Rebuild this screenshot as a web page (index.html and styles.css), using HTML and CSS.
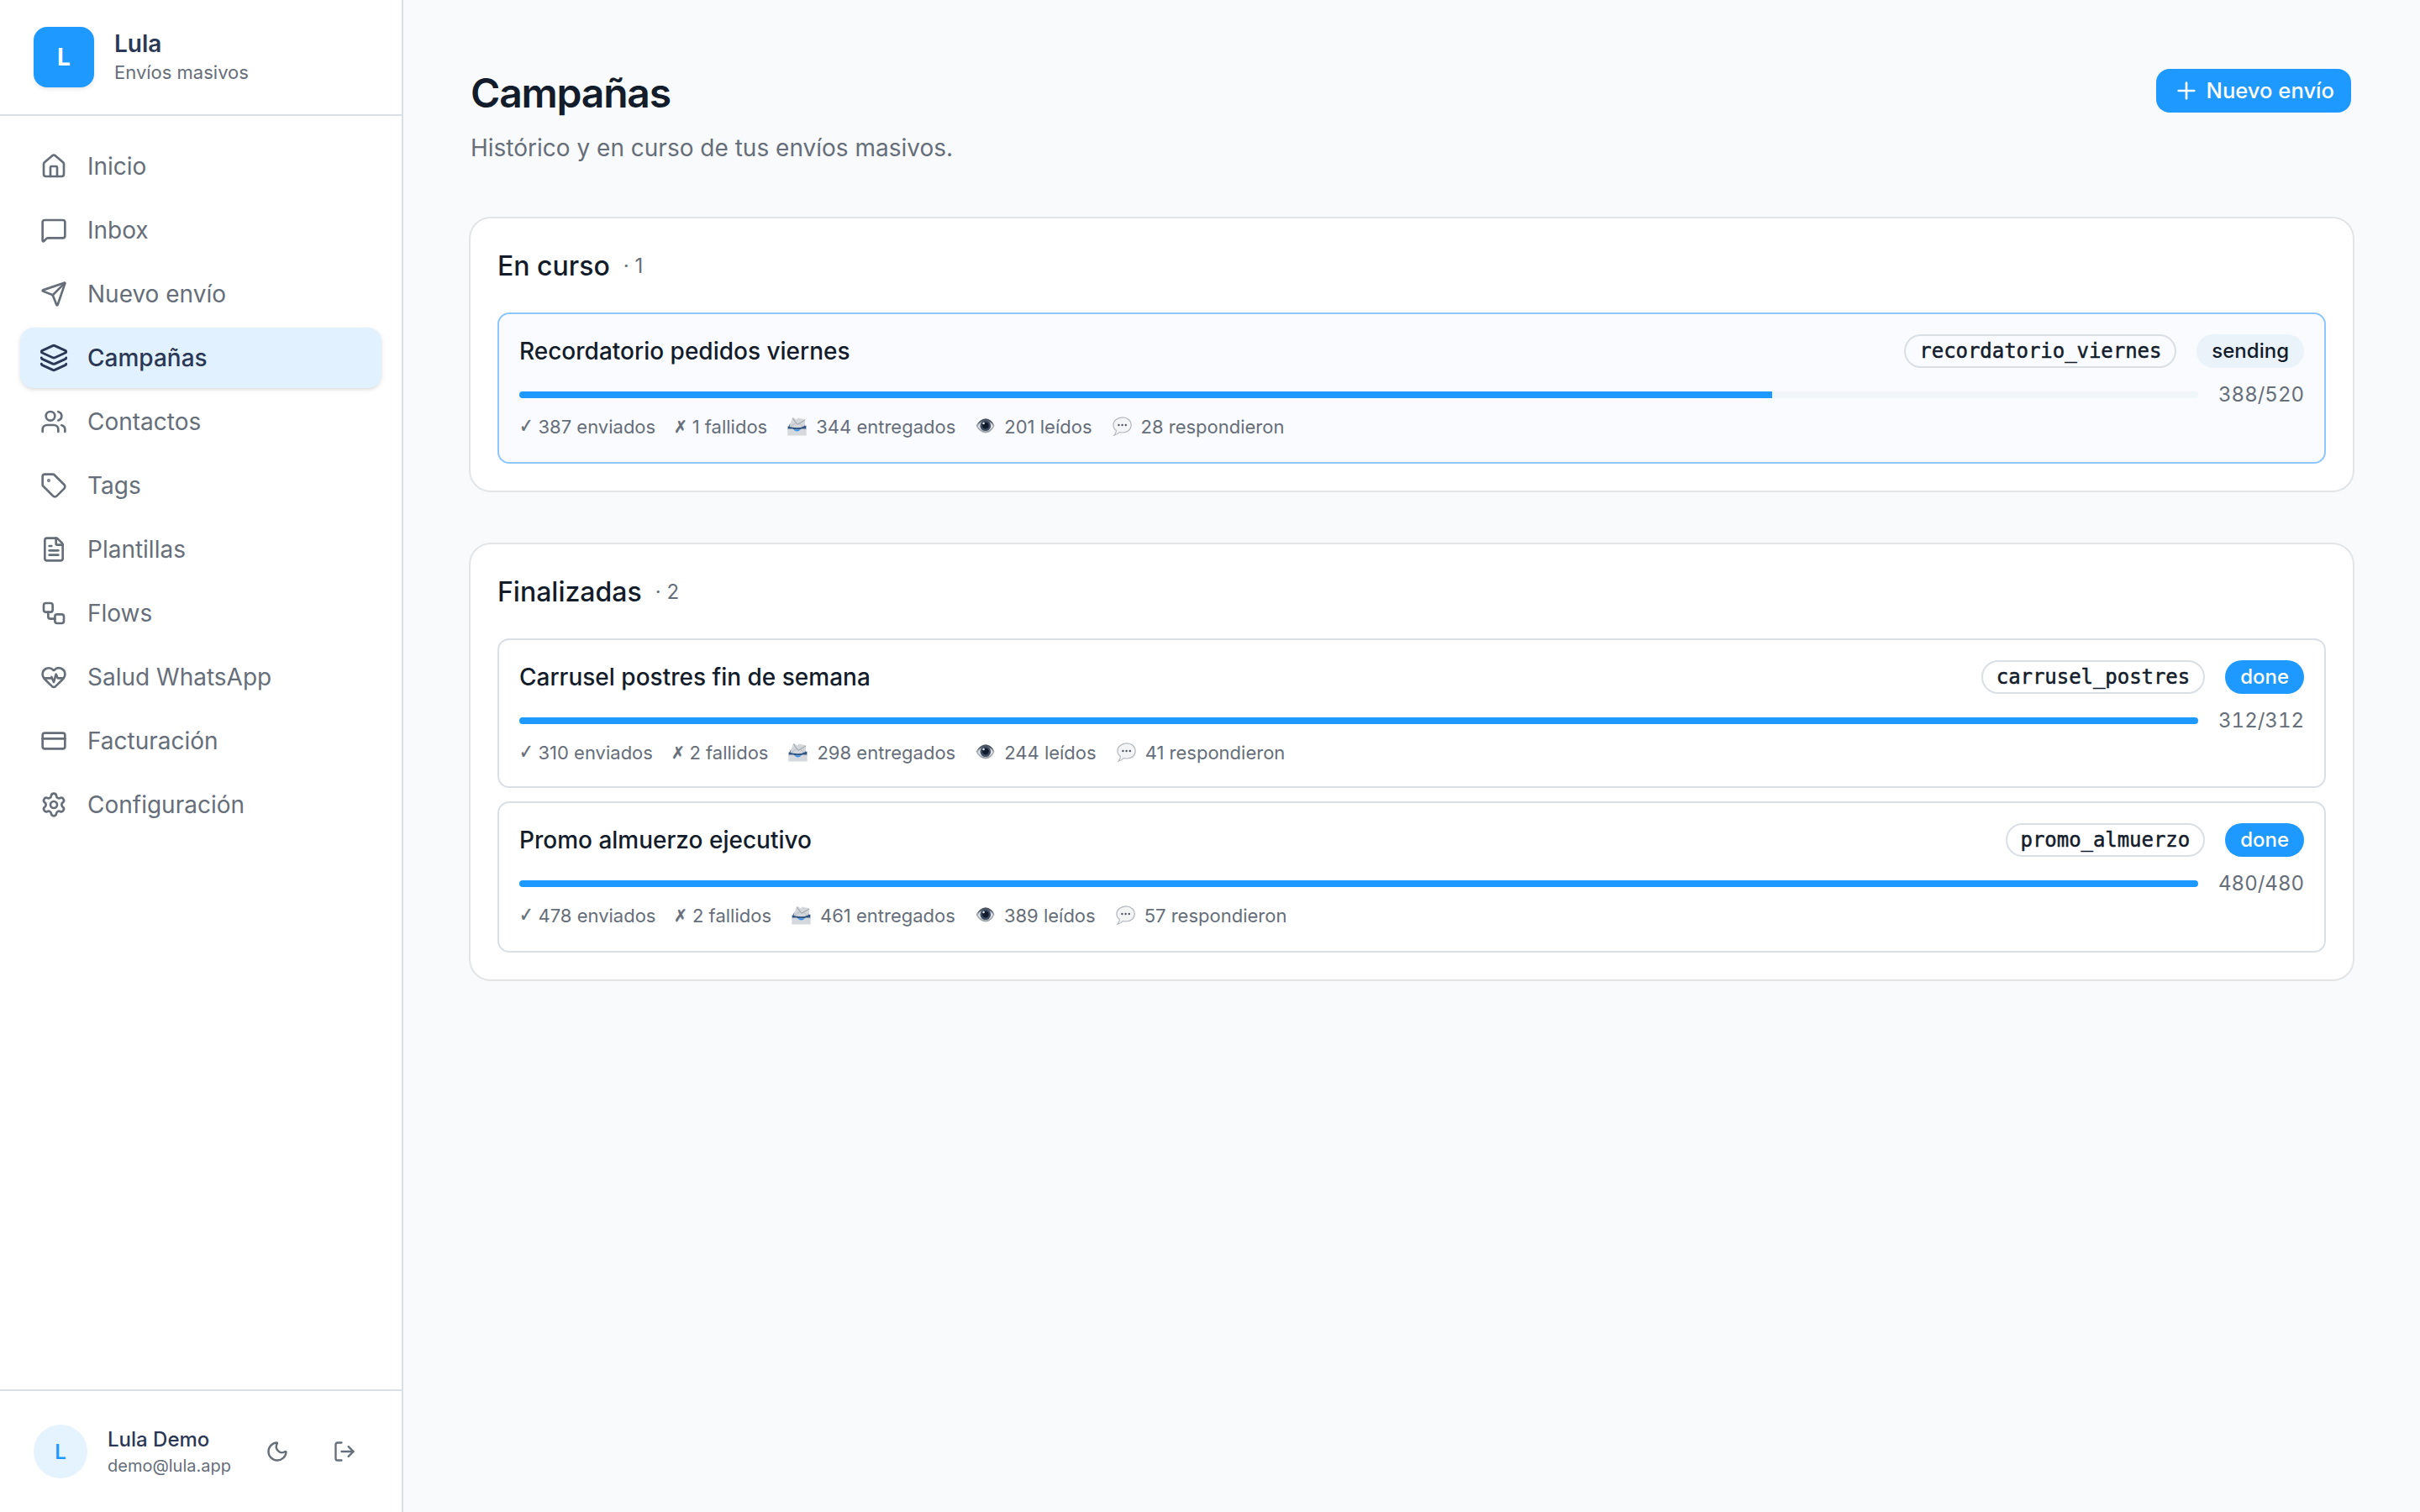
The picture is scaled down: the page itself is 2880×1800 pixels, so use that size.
FILE: index.html
```html
<!DOCTYPE html>
<html lang="es">
<head>
<meta charset="utf-8">
<title>Campañas · Lula</title>
<link rel="stylesheet" href="styles.css">
</head>
<body>
<svg class="sprite" aria-hidden="true">
  <symbol id="tray" viewBox="0 0 23 23">
    <path d="M1 12.5 L3 8.5 H20 L22 12.5Z" fill="#5c7593"/>
    <path d="M6.4 .5 L11 3.6 L12.8 1.6 L21.4 3.6 L20 14 H2.4 L3.4 8.6Z" fill="#d3d6da"/>
    <path d="M6.4 2 L12 9.4 L21 4" fill="none" stroke="#9a9fa6" stroke-width="1"/>
    <path d="M3.4 12 L10 7.4 M19.6 12.6 L14.4 8" fill="none" stroke="#b2b6bb" stroke-width=".8"/>
    <path d="M0.6 11.4 Q6 13 11.5 13.2 Q17 13 22.4 10.4 V15.4 H0.6Z" fill="#2f5482"/>
    <path d="M0.3 14.6 H6.3 Q8 16.6 11.5 16.6 Q15 16.6 16.7 14.6 H22.7 V22.4 H0.3Z" fill="#d5d8dc"/>
    <path d="M7.4 15.4 Q11.5 19.4 15.6 15.4Z" fill="#2f8ff0"/>
  </symbol>
  <symbol id="eye" viewBox="0 0 23 23">
    <path d="M.6 11 Q5 3.4 12 3.2 Q19 3.6 22.4 11 Q18.6 19.4 11.6 19.6 Q4.6 18.8 .6 11Z" fill="#a2a7ae"/>
    <path d="M.4 11.4 Q5 2.4 12 2.2 Q19.2 2.6 22.6 11 Q18 5 12 4.8 Q5.4 5 .4 11.4Z" fill="#4b5563"/>
    <path d="M2.4 11.4 Q6 5.6 12 5.4 Q18 5.8 21 11.2 Q17.4 17 11.8 17.2 Q6 16.8 2.4 11.4Z" fill="#dcdfe3"/>
    <circle cx="11.8" cy="10.8" r="6.3" fill="#3c4b60"/>
    <circle cx="11.9" cy="10.6" r="3.8" fill="#101a2b"/>
    <circle cx="9.6" cy="8" r="1.3" fill="#dfe5ec"/>
  </symbol>
  <symbol id="bubble" viewBox="0 0 23 23">
    <path d="M12 .8 C17.8 .8 22.2 4.8 22.2 10 C22.2 15.2 17.8 19 12 19 Q10 19 8.2 18.5 Q6 21.6 2 22.2 Q4.4 19.6 4.4 16.6 Q.9 14 .9 10 C.9 4.8 6 .8 12 .8Z" fill="#f3f4f6" stroke="#b4b8bd" stroke-width="1.2"/>
    <g fill="#4f5660"><circle cx="7.4" cy="10" r="1.2"/><circle cx="11.6" cy="10" r="1.2"/><circle cx="15.8" cy="10" r="1.2"/></g>
  </symbol>
</svg>
<div class="app">
  <aside class="sidebar">
    <div class="brand">
      <div class="brand-logo">L</div>
      <div class="brand-text">
        <span class="brand-name">Lula</span>
        <span class="brand-sub">Envíos masivos</span>
      </div>
    </div>
    <nav class="nav">
      <a class="nav-item"><svg class="icon" viewBox="0 0 24 24"><path d="M15 21v-8a1 1 0 0 0-1-1h-4a1 1 0 0 0-1 1v8"/><path d="M3 10a2 2 0 0 1 .709-1.528l7-6a2 2 0 0 1 2.582 0l7 6A2 2 0 0 1 21 10v9a2 2 0 0 1-2 2H5a2 2 0 0 1-2-2z"/></svg>Inicio</a>
      <a class="nav-item"><svg class="icon" viewBox="0 0 24 24"><path d="M22 17a2 2 0 0 1-2 2H6.828a2 2 0 0 0-1.414.586l-2.202 2.202A.71.71 0 0 1 2 21.286V5a2 2 0 0 1 2-2h16a2 2 0 0 1 2 2z"/></svg>Inbox</a>
      <a class="nav-item"><svg class="icon" viewBox="0 0 24 24"><path d="M14.536 21.686a.5.5 0 0 0 .937-.024l6.5-19a.496.496 0 0 0-.635-.635l-19 6.5a.5.5 0 0 0-.024.937l7.93 3.18a2 2 0 0 1 1.112 1.11z"/><path d="m21.854 2.147-10.94 10.939"/></svg>Nuevo envío</a>
      <a class="nav-item active"><svg class="icon" viewBox="0 0 24 24"><path d="M12.83 2.18a2 2 0 0 0-1.66 0L2.6 6.08a1 1 0 0 0 0 1.83l8.58 3.91a2 2 0 0 0 1.66 0l8.58-3.9a1 1 0 0 0 0-1.83z"/><path d="M2 12a1 1 0 0 0 .58.91l8.6 3.91a2 2 0 0 0 1.65 0l8.58-3.9A1 1 0 0 0 22 12"/><path d="M2 17a1 1 0 0 0 .58.91l8.6 3.91a2 2 0 0 0 1.65 0l8.58-3.9A1 1 0 0 0 22 17"/></svg>Campañas</a>
      <a class="nav-item"><svg class="icon" viewBox="0 0 24 24"><path d="M16 21v-2a4 4 0 0 0-4-4H6a4 4 0 0 0-4 4v2"/><path d="M16 3.128a4 4 0 0 1 0 7.744"/><path d="M22 21v-2a4 4 0 0 0-3-3.87"/><circle cx="9" cy="7" r="4"/></svg>Contactos</a>
      <a class="nav-item"><svg class="icon" viewBox="0 0 24 24"><path d="M12.586 2.586A2 2 0 0 0 11.172 2H4a2 2 0 0 0-2 2v7.172a2 2 0 0 0 .586 1.414l8.704 8.704a2.426 2.426 0 0 0 3.42 0l6.58-6.58a2.426 2.426 0 0 0 0-3.42z"/><circle cx="7.5" cy="7.5" r=".5" fill="currentColor"/></svg>Tags</a>
      <a class="nav-item"><svg class="icon" viewBox="0 0 24 24"><path d="M6 22a2 2 0 0 1-2-2V4a2 2 0 0 1 2-2h8a2.4 2.4 0 0 1 1.704.706l3.588 3.588A2.4 2.4 0 0 1 20 8v12a2 2 0 0 1-2 2z"/><path d="M14 2v5a1 1 0 0 0 1 1h5"/><path d="M10 9H8"/><path d="M16 13H8"/><path d="M16 17H8"/></svg>Plantillas</a>
      <a class="nav-item"><svg class="icon" viewBox="0 0 24 24"><rect width="8" height="8" x="3" y="3" rx="2"/><path d="M7 11v4a2 2 0 0 0 2 2h4"/><rect width="8" height="8" x="13" y="13" rx="2"/></svg>Flows</a>
      <a class="nav-item"><svg class="icon" viewBox="0 0 24 24"><path d="M2 9.5a5.5 5.5 0 0 1 9.591-3.676.56.56 0 0 0 .818 0A5.49 5.49 0 0 1 22 9.5c0 2.29-1.5 4-3 5.5l-5.492 5.313a2 2 0 0 1-3 .019L5 15c-1.5-1.5-3-3.2-3-5.5"/><path d="M3.22 13H9.5l.5-1 2 4.5 2-7 1.5 3.5h5.27"/></svg>Salud WhatsApp</a>
      <a class="nav-item"><svg class="icon" viewBox="0 0 24 24"><rect width="20" height="14" x="2" y="5" rx="2"/><path d="M2 10h20"/></svg>Facturación</a>
      <a class="nav-item"><svg class="icon" viewBox="0 0 24 24"><path d="M9.671 4.136a2.34 2.34 0 0 1 4.659 0 2.34 2.34 0 0 0 3.319 1.915 2.34 2.34 0 0 1 2.33 4.033 2.34 2.34 0 0 0 0 3.831 2.34 2.34 0 0 1-2.33 4.033 2.34 2.34 0 0 0-3.319 1.915 2.34 2.34 0 0 1-4.659 0 2.34 2.34 0 0 0-3.32-1.915 2.34 2.34 0 0 1-2.33-4.033 2.34 2.34 0 0 0 0-3.831A2.34 2.34 0 0 1 6.35 6.051a2.34 2.34 0 0 0 3.319-1.915"/><circle cx="12" cy="12" r="3"/></svg>Configuración</a>
    </nav>
    <div class="account">
      <div class="avatar">L</div>
      <div class="account-text">
        <span class="account-name">Lula Demo</span>
        <span class="account-mail">demo@lula.app</span>
      </div>
      <button class="icon-btn" aria-label="Tema"><svg class="icon small" viewBox="0 0 24 24"><path d="M20.985 12.486a9 9 0 1 1-9.473-9.472c.405-.022.617.46.402.803a6 6 0 0 0 8.268 8.268c.344-.215.825-.004.803.401"/></svg></button>
      <button class="icon-btn" aria-label="Salir"><svg class="icon small" viewBox="0 0 24 24"><path d="m16 17 5-5-5-5"/><path d="M21 12H9"/><path d="M9 21H5a2 2 0 0 1-2-2V5a2 2 0 0 1 2-2h4"/></svg></button>
    </div>
  </aside>

  <main class="main">
    <header class="page-head">
      <div>
        <h1 class="title">Campañas</h1>
        <p class="subtitle">Histórico y en curso de tus envíos masivos.</p>
      </div>
      <button class="btn"><svg class="icon" viewBox="0 0 24 24"><path d="M5 12h14"/><path d="M12 5v14"/></svg><span class="btn-label">Nuevo envío</span></button>
    </header>

    <section class="card">
      <h2 class="card-title">En curso <span class="card-count">· 1</span></h2>
      <div class="rows">
        <article class="row live">
          <div class="row-head"><span class="row-name">Recordatorio pedidos viernes</span><span class="badge mono">recordatorio_viernes</span><span class="badge soft">sending</span></div>
          <div class="progress"><div class="track"><div class="fill" style="width:74.6%"></div></div><span class="count">388/520</span></div>
          <div class="stats">
            <span class="stat"><span class="tick">✓</span>387 enviados</span>
            <span class="stat"><span class="cross">✗</span>1 fallidos</span>
            <span class="stat"><svg class="emoji"><use href="#tray"/></svg>344 entregados</span>
            <span class="stat"><svg class="emoji"><use href="#eye"/></svg>201 leídos</span>
            <span class="stat"><svg class="emoji"><use href="#bubble"/></svg>28 respondieron</span>
          </div>
        </article>
      </div>
    </section>

    <section class="card">
      <h2 class="card-title">Finalizadas <span class="card-count">· 2</span></h2>
      <div class="rows">
        <article class="row compact">
          <div class="row-head"><span class="row-name">Carrusel postres fin de semana</span><span class="badge mono">carrusel_postres</span><span class="badge solid">done</span></div>
          <div class="progress"><div class="track"><div class="fill" style="width:100%"></div></div><span class="count">312/312</span></div>
          <div class="stats">
            <span class="stat"><span class="tick">✓</span>310 enviados</span>
            <span class="stat"><span class="cross">✗</span>2 fallidos</span>
            <span class="stat"><svg class="emoji"><use href="#tray"/></svg>298 entregados</span>
            <span class="stat"><svg class="emoji"><use href="#eye"/></svg>244 leídos</span>
            <span class="stat"><svg class="emoji"><use href="#bubble"/></svg>41 respondieron</span>
          </div>
        </article>
        <article class="row">
          <div class="row-head"><span class="row-name">Promo almuerzo ejecutivo</span><span class="badge mono">promo_almuerzo</span><span class="badge solid">done</span></div>
          <div class="progress"><div class="track"><div class="fill" style="width:100%"></div></div><span class="count">480/480</span></div>
          <div class="stats">
            <span class="stat"><span class="tick">✓</span>478 enviados</span>
            <span class="stat"><span class="cross">✗</span>2 fallidos</span>
            <span class="stat"><svg class="emoji"><use href="#tray"/></svg>461 entregados</span>
            <span class="stat"><svg class="emoji"><use href="#eye"/></svg>389 leídos</span>
            <span class="stat"><svg class="emoji"><use href="#bubble"/></svg>57 respondieron</span>
          </div>
        </article>
      </div>
    </section>
  </main>
</div>
</body>
</html>
```
FILE: styles.css
```css
:root {
  --primary: #1e99ff;
  --ink: #131c2b;
  --navy: #2b3855;
  --muted: #666e7a;
  --line: #d9dfe5;
  --bg: #f9fafc;
}

* { box-sizing: border-box; margin: 0; }

body {
  font-family: Inter, "Liberation Sans", sans-serif;
  font-size: 28px;
  color: var(--ink);
  background: var(--bg);
}

.sprite { position: absolute; width: 0; height: 0; }

.app { display: flex; height: 1800px; }

/* Sidebar */
.sidebar {
  display: flex;
  flex-direction: column;
  flex: none;
  width: 480px;
  background: #fff;
  border-right: 2px solid var(--line);
}

.brand {
  display: flex;
  align-items: center;
  gap: 24px;
  height: 138px;
  padding: 0 40px;
  border-bottom: 2px solid var(--line);
}

.brand-logo {
  display: grid;
  place-items: center;
  width: 72px;
  height: 72px;
  border-radius: 16px;
  background: var(--primary);
  color: #fff;
  font-weight: 700;
  box-shadow: 0 2px 6px rgba(0, 0, 0, .08), 0 2px 4px -2px rgba(0, 0, 0, .08);
}

.brand-text, .account-text { display: flex; flex-direction: column; }
.brand-text { padding-top: 2px; }
.brand-name { font-weight: 600; line-height: 35px; color: var(--navy); }
.brand-sub { font-size: 22px; line-height: 33px; color: var(--muted); }

.nav {
  display: flex;
  flex-direction: column;
  flex: 1;
  gap: 4px;
  padding: 24px;
}

.nav-item {
  display: flex;
  align-items: center;
  gap: 24px;
  height: 72px;
  padding: 0 24px;
  border-radius: 16px;
  color: var(--muted);
}

.nav-item.active {
  background: #e1f1ff;
  color: var(--navy);
  font-weight: 500;
  box-shadow: 0 2px 6px rgba(0, 0, 0, .1), 0 2px 4px -2px rgba(0, 0, 0, .1);
}

.nav-item.active .icon { transform: scale(1.1); }

.icon {
  flex: none;
  width: 32px;
  height: 32px;
  fill: none;
  stroke: currentColor;
  stroke-width: 2;
  stroke-linecap: round;
  stroke-linejoin: round;
}

.icon.small { width: 28px; height: 28px; }

.account {
  display: flex;
  align-items: center;
  gap: 24px;
  height: 146px;
  padding: 0 40px;
  border-top: 2px solid var(--line);
}

.avatar {
  display: grid;
  place-items: center;
  width: 64px;
  height: 64px;
  border-radius: 50%;
  background: #e4f3ff;
  color: var(--primary);
  font-size: 24px;
  font-weight: 600;
}

.account-text { flex: 1; }
.account-name { font-size: 24px; font-weight: 500; line-height: 33px; color: var(--navy); }
.account-mail { font-size: 20px; line-height: 30px; color: var(--muted); }

.icon-btn {
  display: grid;
  place-items: center;
  width: 56px;
  height: 56px;
  padding: 0;
  border: 0;
  background: none;
  color: var(--muted);
}

/* Page */
.main {
  display: flex;
  flex-direction: column;
  flex: 1;
  gap: 64px;
  padding: 80px;
}

.page-head {
  display: flex;
  align-items: flex-start;
  justify-content: space-between;
  height: 116px;
}

.title {
  font-size: 48px;
  font-weight: 600;
  line-height: 62px;
  letter-spacing: -.025em;
}

.subtitle { margin-top: 13px; line-height: 42px; color: var(--muted); }

.btn {
  display: flex;
  align-items: center;
  gap: 8px;
  height: 56px;
  padding: 0 20px;
  border: 2px solid transparent;
  border-radius: 18px;
  background: var(--primary);
  background-clip: padding-box;
  color: #fff;
  font: 500 25.6px Inter, "Liberation Sans", sans-serif;
}

.btn-label { padding-bottom: 2px; }

.card {
  padding: 32px;
  border-radius: 24px;
  background: #fff;
  box-shadow: 0 0 0 2px #e2e4e6;
}

.card-title {
  display: flex;
  align-items: center;
  gap: 16px;
  margin-bottom: 30px;
  font-size: 32px;
  font-weight: 500;
  line-height: 50px;
}

.card-count { font-size: 24px; font-weight: 400; line-height: 48px; color: var(--muted); }

.rows { display: flex; flex-direction: column; gap: 16px; }

.row {
  height: 180px;
  padding: 24px;
  border: 2px solid var(--line);
  border-radius: 14px;
}

.row.compact { height: 178px; }
.row.live { border-color: #8ec7ff; background: #fafbff; }

.row-head { display: flex; align-items: center; gap: 24px; height: 40px; }
.row-name { flex: 1; font-weight: 500; }

.badge {
  display: flex;
  align-items: center;
  height: 40px;
  padding: 0 16px 1px;
  border: 2px solid transparent;
  border-radius: 20px;
  font-size: 24px;
  font-weight: 500;
}

.badge.mono {
  border-color: var(--line);
  font-family: "DejaVu Sans Mono", monospace;
  font-weight: 400;
  letter-spacing: -.05px;
  -webkit-text-stroke: .5px currentColor;
}

.badge.soft { background: #eaf3fa; }
.badge.solid { background: var(--primary); color: #fff; }

.progress {
  display: flex;
  align-items: center;
  gap: 24px;
  height: 36px;
  margin-top: 14px;
}

.track { flex: 1; height: 8px; border-radius: 4px; background: #f1f6fb; overflow: hidden; }
.fill { height: 100%; background: var(--primary); }

.count {
  width: 102px;
  padding-bottom: 2px;
  font-size: 24px;
  text-align: right;
  font-variant-numeric: tabular-nums;
  color: var(--muted);
}

.stats {
  display: flex;
  gap: 24px;
  margin-top: 4px;
  font-size: 22px;
  line-height: 32px;
  color: var(--muted);
}

.stat { display: flex; }

.tick, .cross {
  font-family: "DejaVu Sans", sans-serif;
  transform-origin: 0 60%;
  -webkit-text-stroke: .4px currentColor;
}
.tick { width: 22.5px; font-size: 22px; transform: scale(.9, 1.1); }
.cross { width: 19.5px; font-size: 20px; transform: translateX(-2px) scaleX(.95); }

.emoji { width: 23px; height: 23px; margin: 4px 11px 0 0; }
```
